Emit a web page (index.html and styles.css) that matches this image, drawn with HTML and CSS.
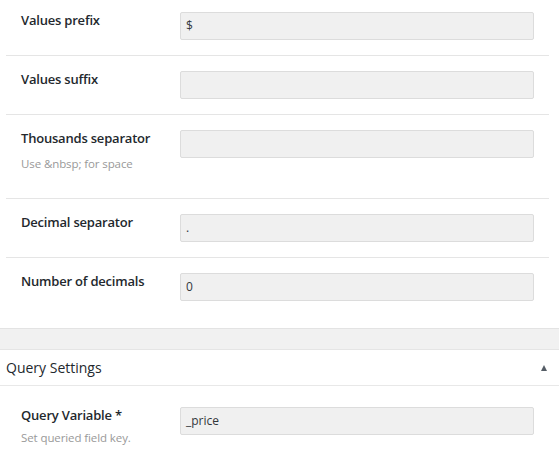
FILE: index.html
```html
<!DOCTYPE html>
<html lang="en">
<head>
<meta charset="utf-8">
<title>Settings</title>
<link rel="stylesheet" href="styles.css">
</head>
<body>
<div class="panel">
  <div class="fields">
    <div class="row row--first">
      <div class="label-col"><div class="label">Values prefix</div></div>
      <div class="input">$</div>
    </div>
    <div class="row">
      <div class="label-col"><div class="label">Values suffix</div></div>
      <div class="input"></div>
    </div>
    <div class="row">
      <div class="label-col">
        <div class="label">Thousands separator</div>
        <div class="help">Use &amp;nbsp; for space</div>
      </div>
      <div class="input"></div>
    </div>
    <div class="row">
      <div class="label-col"><div class="label">Decimal separator</div></div>
      <div class="input">.</div>
    </div>
    <div class="row row--last">
      <div class="label-col"><div class="label">Number of decimals</div></div>
      <div class="input">0</div>
    </div>
  </div>
</div>
<div class="gap"></div>
<div class="section">
  <div class="section-head">
    <span class="section-title">Query Settings</span>
    <span class="caret"></span>
  </div>
  <div class="section-body">
    <div class="fields">
      <div class="row row--last">
        <div class="label-col">
          <div class="label">Query Variable *</div>
          <div class="help help--tight">Set queried field key.</div>
        </div>
        <div class="input">_price</div>
      </div>
    </div>
  </div>
</div>
</body>
</html>
```
FILE: styles.css
```css
html, body {
  margin: 0;
  padding: 0;
  background: #ffffff;
  font-family: "Open Sans", "Noto Sans", sans-serif;
  color: #23282d;
}

.panel {
  background: #ffffff;
  padding-bottom: 12px;
  border-bottom: 1px solid #e3e3e3;
}

.fields {
  margin: 0 10px 0 6px;
}

.row {
  display: flex;
  align-items: flex-start;
  padding: 15px 0;
  border-bottom: 1px solid #e5e5e5;
}

.row--first {
  padding-top: 12px;
}

.row--last {
  border-bottom: none;
}

.label-col {
  box-sizing: border-box;
  width: 174px;
  flex: none;
  padding-left: 15px;
}

.label {
  font-size: 13px;
  font-weight: 600;
  line-height: 16px;
  letter-spacing: -0.2px;
}

.help {
  margin-top: 10px;
  margin-bottom: 11px;
  font-size: 11.5px;
  line-height: 16px;
  color: #999999;
  letter-spacing: -0.1px;
}

.help--tight {
  margin-top: 7px;
  margin-bottom: 0;
}

.input {
  box-sizing: border-box;
  width: 354px;
  height: 28px;
  flex: none;
  padding: 0 5px;
  background: #f0f0f0;
  border: 1px solid #dcdcdc;
  border-radius: 2px;
  font-size: 12px;
  line-height: 26px;
  color: #32373c;
}

.gap {
  height: 20px;
  background: #f1f1f1;
}

.section {
  border-top: 1px solid #e5e5e5;
  background: #ffffff;
}

.section-head {
  display: flex;
  align-items: center;
  justify-content: space-between;
  height: 35px;
  padding: 0 12px 0 6px;
  border-bottom: 1px solid #e8e8e8;
}

.section-title {
  font-size: 14px;
  line-height: 35px;
  color: #23282d;
}

.caret {
  width: 0;
  height: 0;
  border-left: 3.5px solid transparent;
  border-right: 3.5px solid transparent;
  border-bottom: 6px solid #555d66;
}

.section-body {
  padding-top: 6px;
}
```
